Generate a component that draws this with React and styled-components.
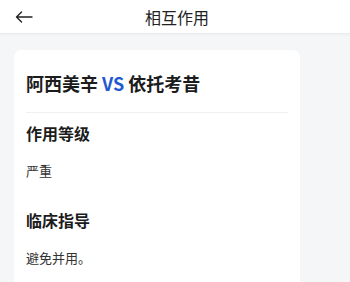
import React from "react";
import styled, { createGlobalStyle } from "styled-components";

const GlobalStyle = createGlobalStyle`
  html, body {
    margin: 0;
    padding: 0;
    background: #f5f6f8;
    font-family: "Noto Sans CJK SC", "Noto Sans", sans-serif;
  }
  * {
    box-sizing: border-box;
  }
`;

const Page = styled.div`
  min-height: 282px;
  background: #f5f6f8;
`;

const Header = styled.div`
  height: 34px;
  display: grid;
  grid-template-columns: 1fr auto 1fr;
  align-items: center;
  padding: 0 11px 0 15px;
  background: #ffffff;
  border-bottom: 1px solid #ececee;
  box-shadow: 0 1px 2px rgba(0, 0, 0, 0.03);
`;

const BackButton = styled.div`
  display: flex;
  align-items: center;
  color: #222;
`;

const HeaderTitle = styled.div`
  font-size: 16px;
  line-height: 22px;
  color: #222;
`;

const Body = styled.div`
  padding: 16px 0 0 14px;
`;

const Card = styled.div`
  width: 286px;
  background: #ffffff;
  border-radius: 7px;
  padding: 0 12px;
`;

const PairTitle = styled.div`
  padding: 21px 0 17px;
  font-size: 18px;
  line-height: 24px;
  font-weight: 700;
  color: #1c1c1c;
  border-bottom: 1px solid #f0f0f2;
`;

const Versus = styled.span`
  color: #2259d2;
  margin: 0 4px;
`;

const Section = styled.div`
  padding: 9px 0 20px;
`;

const SectionTitle = styled.div`
  font-size: 16px;
  line-height: 22px;
  font-weight: 700;
  color: #1c1c1c;
`;

const SectionText = styled.div`
  margin-top: 18px;
  font-size: 13px;
  line-height: 18px;
  color: #333;
`;

const sections = [
  { title: "作用等级", text: "严重" },
  { title: "临床指导", text: "避免并用。" },
];

export default function App() {
  return (
    <Page>
      <GlobalStyle />
      <Header>
        <BackButton>
          <svg width="18" height="12" viewBox="0 0 18 12" fill="none">
            <path
              d="M17 6H1.5M6.5 1L1.5 6l5 5"
              stroke="#222"
              strokeWidth="1.4"
              strokeLinecap="round"
              strokeLinejoin="round"
            />
          </svg>
        </BackButton>
        <HeaderTitle>相互作用</HeaderTitle>
        <div />
      </Header>
      <Body>
        <Card>
          <PairTitle>
            阿西美辛<Versus>VS</Versus>依托考昔
          </PairTitle>
          {sections.map((s) => (
            <Section key={s.title}>
              <SectionTitle>{s.title}</SectionTitle>
              <SectionText>{s.text}</SectionText>
            </Section>
          ))}
        </Card>
      </Body>
    </Page>
  );
}
